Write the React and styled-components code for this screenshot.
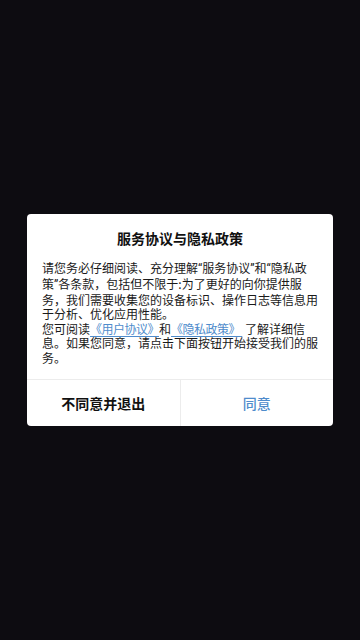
import React from "react";
import styled, { createGlobalStyle } from "styled-components";

const GlobalStyle = createGlobalStyle`
  html, body {
    margin: 0;
    padding: 0;
    background: #0d0c11;
    font-family: Roboto, "Noto Sans CJK SC", sans-serif;
  }
`;

//full screen dark backdrop
const Screen = styled.div`
  width: 360px;
  height: 640px;
  display: flex;
  align-items: center;
  justify-content: center;
  background: #0d0c11;
`;

const Dialog = styled.div`
  width: 306px;
  background: #ffffff;
  border-radius: 4px;
  display: flex;
  flex-direction: column;
  overflow: hidden;
`;

const Title = styled.h2`
  margin: 0;
  padding: 16px 0 0;
  font-size: 14px;
  font-weight: 700;
  line-height: 18px;
  color: #111;
  text-align: center;
`;

const Body = styled.p`
  margin: 0;
  padding: 13px 15px 13px;
  font-family: "Noto Sans CJK SC", sans-serif;
  font-size: 12px;
  line-height: 14.6px;
  color: #1a1a1a;
  text-spacing-trim: space-all;
  font-feature-settings: "halt" 0, "chws" 0;
`;

//western quotes are narrower than the CJK ones
const Quote = styled.span`
  font-family: Roboto, sans-serif;
`;

const Link = styled.a`
  color: #4f8ccc;
  letter-spacing: -0.5px;
  text-decoration: underline;
  text-underline-offset: 2px;
`;

const Buttons = styled.div`
  display: flex;
  border-top: 1px solid #ececec;
  height: 46px;
`;

const Button = styled.button`
  flex: 1;
  border: none;
  background: transparent;
  font-family: Roboto, "Noto Sans CJK SC", sans-serif;
  font-size: 14px;
  font-weight: ${(p) => (p.$primary ? 500 : 700)};
  color: ${(p) => (p.$primary ? "#4f8ccc" : "#111")};
  & + & {
    border-left: 1px solid #ececec;
  }
`;

export default function App() {
  return (
    <Screen>
      <GlobalStyle />
      <Dialog>
        <Title>服务协议与隐私政策</Title>
        <Body>
          请您务必仔细阅读、充分理解<Quote>“</Quote>服务协议<Quote>”</Quote>和<Quote>“</Quote>隐私政策<Quote>”</Quote>各条款，包括但不限于:为了更好的向你提供服务，我们需要收集您的设备标识、操作日志等信息用于分析、优化应用性能。
          <br />
          您可阅读<Link>《用户协议》</Link>和<Link>《隐私政策》{"\u00a0"}</Link> 了解详细信息。如果您同意，请点击下面按钮开始接受我们的服务。
        </Body>
        <Buttons>
          <Button>不同意并退出</Button>
          <Button $primary>同意</Button>
        </Buttons>
      </Dialog>
    </Screen>
  );
}
